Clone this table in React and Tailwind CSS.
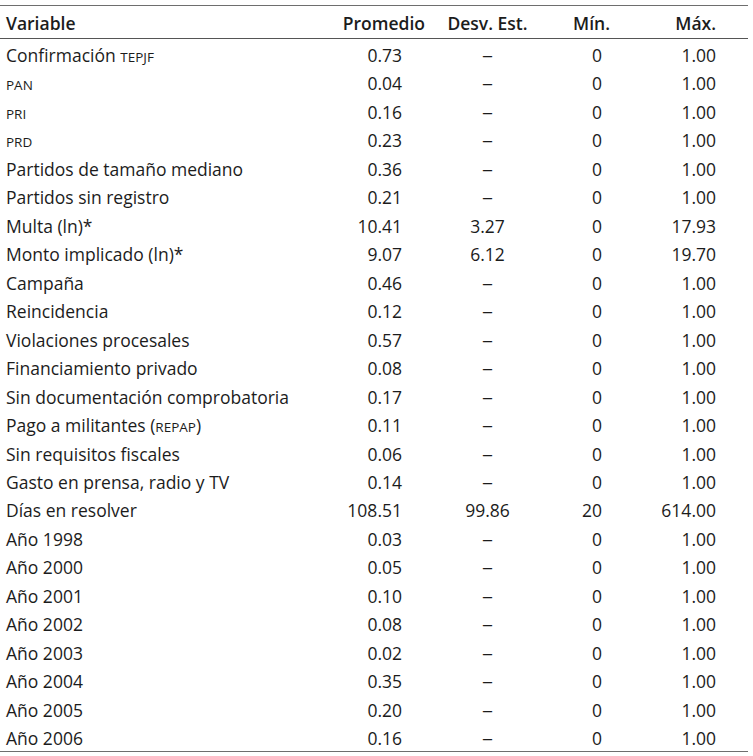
const rows = [
  [<>Confirmación <span className="text-[13.5px]">TEPJF</span></>, "0.73", "–", "0", "1.00"],
  [<span className="text-[13.5px]">PAN</span>, "0.04", "–", "0", "1.00"],
  [<span className="text-[13.5px]">PRI</span>, "0.16", "–", "0", "1.00"],
  [<span className="text-[13.5px]">PRD</span>, "0.23", "–", "0", "1.00"],
  ["Partidos de tamaño mediano", "0.36", "–", "0", "1.00"],
  ["Partidos sin registro", "0.21", "–", "0", "1.00"],
  ["Multa (ln)*", "10.41", "3.27", "0", "17.93"],
  ["Monto implicado (ln)*", "9.07", "6.12", "0", "19.70"],
  ["Campaña", "0.46", "–", "0", "1.00"],
  ["Reincidencia", "0.12", "–", "0", "1.00"],
  ["Violaciones procesales", "0.57", "–", "0", "1.00"],
  ["Financiamiento privado", "0.08", "–", "0", "1.00"],
  ["Sin documentación comprobatoria", "0.17", "–", "0", "1.00"],
  [<>Pago a militantes (<span className="text-[13.5px]">REPAP</span>)</>, "0.11", "–", "0", "1.00"],
  ["Sin requisitos fiscales", "0.06", "–", "0", "1.00"],
  ["Gasto en prensa, radio y TV", "0.14", "–", "0", "1.00"],
  ["Días en resolver", "108.51", "99.86", "20", "614.00"],
  ["Año 1998", "0.03", "–", "0", "1.00"],
  ["Año 2000", "0.05", "–", "0", "1.00"],
  ["Año 2001", "0.10", "–", "0", "1.00"],
  ["Año 2002", "0.08", "–", "0", "1.00"],
  ["Año 2003", "0.02", "–", "0", "1.00"],
  ["Año 2004", "0.35", "–", "0", "1.00"],
  ["Año 2005", "0.20", "–", "0", "1.00"],
  ["Año 2006", "0.16", "–", "0", "1.00"],
];

const cols = "grid grid-cols-[330px_100px_115px_75px_128px]";

export default function App() {
  return (
    <div className="bg-white min-h-screen pt-[5px] text-[#1c1c1c]" style={{ fontFamily: '"Open Sans", sans-serif' }}>
      <div className="w-[748px] border-t-[1.5px] border-b-[1.5px] border-[#6e6e6e]">
        <div className={`${cols} h-[33px] items-center border-b border-[#555] text-[17.5px] font-semibold pt-[2px]`}>
          <div className="pl-[6px]">Variable</div>
          <div className="text-right pr-[5px]">Promedio</div>
          <div className="text-center">Desv. Est.</div>
          <div className="text-right pr-[10px]">Mín.</div>
          <div className="text-right pr-[32px]">Máx.</div>
        </div>
        {rows.map((r, i) => (
          <div key={i} className={`${cols} h-[28.48px] items-center text-[17.5px] leading-none pt-[5px]`}>
            <div className="pl-[6px]">{r[0]}</div>
            <div className="text-right pr-[28px]">{r[1]}</div>
            <div className="text-center">
              {r[2] === "–" ? <span className="inline-block scale-x-125">–</span> : r[2]}
            </div>
            <div className="text-right pr-[18px]">{r[3]}</div>
            <div className="text-right pr-[32px]">{r[4]}</div>
          </div>
        ))}
      </div>
    </div>
  );
}
